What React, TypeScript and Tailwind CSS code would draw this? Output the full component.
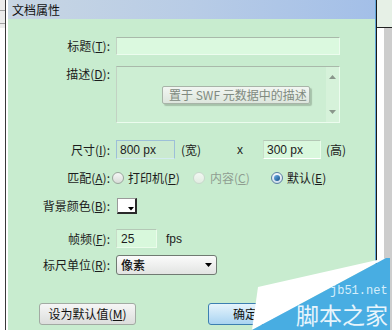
import React from "react";

const cjk = { fontFamily: '"Noto Sans CJK SC", "Noto Sans", sans-serif' };
const lat = { fontFamily: '"Liberation Sans", Arial, sans-serif' };

function U({ c }: { c: string }) {
  return <span className="underline underline-offset-1">{c}</span>;
}

function Label({ text, acc }: { text: string; acc: string }) {
  return (
    <div className="w-[102px] shrink-0 text-right text-[12px] leading-[16px] text-[#1c1c1c] whitespace-nowrap" style={cjk}>
      {text}(<U c={acc} />):
    </div>
  );
}

function Radio({ checked, disabled }: { checked?: boolean; disabled?: boolean }) {
  if (checked) {
    return (
      <div className="w-[12px] h-[12px] rounded-full border border-[#5b7fa0] bg-gradient-to-b from-[#f4f8fc] to-[#cfdeec] flex items-center justify-center shrink-0">
        <div className="w-[6px] h-[6px] rounded-full bg-gradient-to-br from-[#6fb4ea] to-[#114d86]" />
      </div>
    );
  }
  return (
    <div
      className={
        "w-[12px] h-[12px] rounded-full border shrink-0 " +
        (disabled
          ? "border-[#c8d8cc] bg-gradient-to-b from-[#f2f8f2] to-[#e2ece2]"
          : "border-[#9aa69c] bg-gradient-to-b from-[#f6f8f6] to-[#d8dcd8]")
      }
    />
  );
}

export default function App() {
  return (
    <div className="relative w-[392px] h-[330px] overflow-hidden flex bg-white">
      {/* left strip */}
      <div className="w-[5px] h-full bg-white flex flex-col">
        <div className="h-[28px] bg-[#ececec] flex flex-col">
          <div className="h-[10px]" />
          <div className="h-px bg-[#a0a0a0]" />
          <div className="h-[12px]" />
          <div className="h-px bg-[#a0a0a0]" />
        </div>
      </div>
      <div className="w-px h-full bg-[#3a3a3a]" />
      <div className="w-[2px] h-full bg-white" />

      {/* dialog */}
      <div className="w-[367px] h-full flex flex-col">
        <div
          className="h-[19px] flex items-center pl-[4px] bg-gradient-to-r from-[#c8d6e3] via-[#b8cce6] to-[#a3bfe8] text-[12px] text-[#111]"
          style={cjk}
        >
          文档属性
        </div>
        <div className="flex-1 bg-[#c8eccf] flex flex-col">
          {/* title */}
          <div className="mt-[18px] flex items-center gap-[6px] h-[18px]">
            <Label text="标题" acc="T" />
            <div className="w-[224px] h-[18px] bg-[#dbf9df] border-t border-l border-t-[#a9b9aa] border-l-[#c2d2c3] border-b border-r border-b-[#ecfcee] border-r-[#ecfcee]" />
          </div>
          {/* description */}
          <div className="mt-[11px] flex items-start gap-[6px] h-[57px]">
            <Label text="描述" acc="D" />
            <div className="relative w-[224px] h-[57px] bg-[#cdeed3] border-t border-l border-t-[#a9b9aa] border-l-[#c2d2c3] border-b border-r border-b-[#ecfcee] border-r-[#ecfcee] flex justify-end">
              <div className="w-[13px] h-full bg-[#d6f2da] flex flex-col items-center justify-between py-[8px]">
                <svg width="7" height="4" viewBox="0 0 7 4">
                  <path d="M0 4 L3.5 0 L7 4 Z" fill="#8a968b" />
                </svg>
                <svg width="7" height="4" viewBox="0 0 7 4">
                  <path d="M0 0 L3.5 4 L7 0 Z" fill="#8a968b" />
                </svg>
              </div>
              <div
                className="absolute left-[45px] top-[19px] w-[148px] h-[18px] rounded-[2px] border border-[#a8b4a8] bg-gradient-to-b from-[#f2f6f2] to-[#dde6dd] shadow-[2px_2px_1px_rgba(120,140,120,0.45)] flex items-center pl-[6px] text-[12px] leading-[16px] text-[#808a80] whitespace-nowrap"
                style={cjk}
              >
                置于 SWF 元数据中的描述
              </div>
            </div>
          </div>
          {/* size */}
          <div className="mt-[17px] flex items-center h-[19px]">
            <Label text="尺寸" acc="I" />
            <div className="ml-[6px] w-[59px] h-[19px] bg-[#cbead0] border border-[#9dbfd8] border-b-[#d4ecf2] flex items-center pl-[3px] text-[12px] text-[#1c1c1c]" style={lat}>
              800 px
            </div>
            <div className="w-[62px] pl-[6px] text-[12px] leading-[16px] text-[#1c1c1c]" style={cjk}>(宽)</div>
            <div className="w-[26px] text-[12px] text-[#1c1c1c]" style={lat}>x</div>
            <div className="w-[58px] h-[19px] bg-[#d9f8dd] border-t border-l border-t-[#b4c8b6] border-l-[#c8dcc8] border-b border-r border-b-white border-r-[#eafcea] flex items-center pl-[3px] text-[12px] text-[#1c1c1c]" style={lat}>
              300 px
            </div>
            <div className="ml-[5px] text-[12px] leading-[16px] text-[#1c1c1c]" style={cjk}>(高)</div>
          </div>
          {/* match */}
          <div className="mt-[11px] flex items-center gap-[6px] h-[16px]">
            <Label text="匹配" acc="A" />
            <div className="flex items-center -ml-[4px]">
              <div className="w-[81px] flex items-center gap-[4px]">
                <Radio />
                <span className="text-[12px] leading-[16px] text-[#1c1c1c]" style={cjk}>
                  打印机(<U c="P" />)
                </span>
              </div>
              <div className="w-[78px] flex items-center gap-[5px]">
                <Radio disabled />
                <span className="text-[12px] leading-[16px] text-[#8f9d91]" style={cjk}>
                  内容(<U c="C" />)
                </span>
              </div>
              <div className="flex items-center gap-[4px]">
                <Radio checked />
                <span className="text-[12px] leading-[16px] text-[#1c1c1c]" style={cjk}>
                  默认(<U c="E" />)
                </span>
              </div>
            </div>
          </div>
          {/* bg color */}
          <div className="mt-[12px] flex items-center gap-[6px] h-[16px]">
            <Label text="背景颜色" acc="B" />
            <div className="relative w-[20px] h-[16px] ml-[1px] bg-white border-t border-l border-t-[#9a9a9a] border-l-[#9a9a9a] border-b-2 border-r-2 border-b-[#2a2a2a] border-r-[#2a2a2a]">
              <svg className="absolute right-[1px] bottom-[1px]" width="6" height="4" viewBox="0 0 6 4">
                <path d="M0 0 L6 0 L3 3.5 Z" fill="#000" />
              </svg>
            </div>
          </div>
          {/* fps */}
          <div className="mt-[15px] flex items-center gap-[6px] h-[19px]">
            <Label text="帧频" acc="F" />
            <div className="w-[41px] h-[19px] bg-[#d8f8dc] border-t border-l border-t-[#b4c8b6] border-l-[#c8dcc8] border-b border-r border-b-[#eafcea] border-r-[#eafcea] flex items-center pl-[4px] text-[12px] text-[#1c1c1c]" style={lat}>
              25
            </div>
            <div className="ml-[3px] text-[12px] text-[#1c1c1c]" style={lat}>fps</div>
          </div>
          {/* ruler unit */}
          <div className="mt-[7px] flex items-center gap-[6px] h-[20px]">
            <Label text="标尺单位" acc="R" />
            <div className="w-[101px] h-[20px] rounded-[3px] border border-[#707a72] bg-gradient-to-b from-[#fbfbfb] to-[#e2e4e2] flex items-center justify-between pl-[4px] pr-[4px]">
              <span className="text-[12px] leading-[16px] text-[#111] font-medium" style={cjk}>像素</span>
              <svg width="7" height="4" viewBox="0 0 7 4">
                <path d="M0 0 L7 0 L3.5 4 Z" fill="#000" />
              </svg>
            </div>
          </div>
          {/* buttons */}
          <div className="mt-[28px] flex items-center h-[22px]">
            <div className="ml-[31px] w-[97px] h-[22px] rounded-[3px] border border-[#a2aaa3] bg-gradient-to-b from-[#f6f6f6] to-[#dcdedc] flex items-center justify-center text-[12px] leading-[16px] text-[#111]" style={cjk}>
              设为默认值(<U c="M" />)
            </div>
            <div className="ml-[72px] w-[94px] h-[22px] rounded-[3px] border border-[#3c7fb1] bg-gradient-to-b from-[#e6f4fc] to-[#a9d4f1] flex items-center pl-[24px] text-[12px] leading-[16px] text-[#111]" style={cjk}>
              确定
            </div>
          </div>
        </div>
      </div>

      {/* right strip */}
      <div className="w-px h-full bg-[#62a6d8]" />
      <div className="w-px h-full bg-[#1a1a1a]" />
      <div className="w-[15px] h-full flex flex-col">
        <div className="h-[28px] bg-[#e6f0e6] border-b border-[#222]" />
        <div className="flex-1 flex">
          <div className="w-[7px] bg-white" />
          <div className="flex-1 bg-[#cdcdcd]" />
        </div>
      </div>

      {/* watermark */}
      <svg className="absolute left-0 top-0 pointer-events-none" width="392" height="330" viewBox="0 0 392 330">
        <polygon points="258,287 386,258 252,330" fill="#ffffff" />
        <polygon points="386,258 390,258 390,330 252,330" fill="#48ade2" />
      </svg>
      <div className="absolute left-[330px] top-[285px] text-[12px] leading-[12px] text-[#d6eefb]" style={{ fontFamily: '"Liberation Mono", monospace' }}>
        jb51.net
      </div>
      <div className="absolute left-[296px] top-[304px] text-[23px] leading-[20px] text-[#e8f5fc] whitespace-nowrap" style={cjk}>
        脚本之家
      </div>
    </div>
  );
}
